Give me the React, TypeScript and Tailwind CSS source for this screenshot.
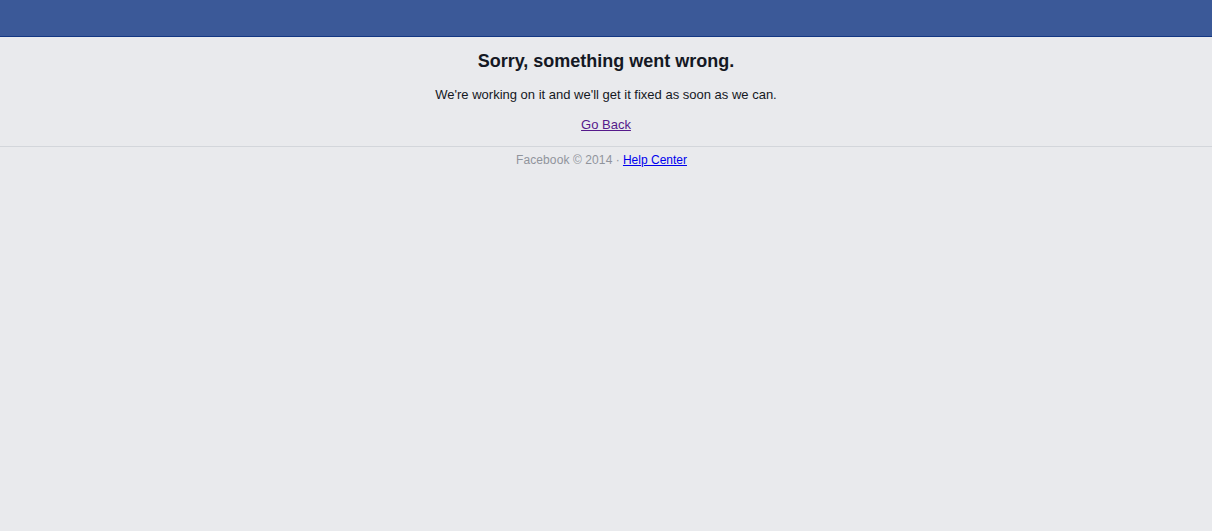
export default function App() {
  return (
    <div className="min-h-[531px] bg-[#e9eaed] text-[#141823]" style={{ fontFamily: '"Liberation Sans", Arial, sans-serif' }}>
      <div className="h-[37px] bg-[#3b5998] border-b border-[#133783]" />
      <div className="flex flex-col items-center pt-[13px] pb-[13px] border-b border-[#d3d6db]">
        <h2 className="text-[18px] font-bold leading-[22px]">Sorry, something went wrong.</h2>
        <p className="text-[13px] leading-[17px] mt-[14px]">We're working on it and we'll get it fixed as soon as we can.</p>
        <a href="#" className="text-[13px] leading-[17px] mt-[13px] text-[#551a8b] underline">Go Back</a>
      </div>
      <div className="flex justify-center pt-[5px] pr-[9px] text-[12px] leading-[16px] text-[#90949c]">
        <span className="tracking-[0.1px]">Facebook © 2014 ·</span>
        <a href="#" className="ml-[3px] text-[#0000ee] underline">Help Center</a>
      </div>
    </div>
  );
}
